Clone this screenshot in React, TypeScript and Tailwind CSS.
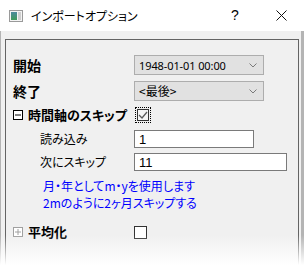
import React from 'react';

const jp = "font-['Noto_Sans_CJK_JP','Noto_Sans',sans-serif] [font-feature-settings:'palt']";

// Small tree toggle box (⊟ / ⊞)
const TreeBox = ({ open }: { open: boolean }) => (
  <svg width="10" height="10" viewBox="0 0 10 10" className="shrink-0">
    <rect x="0.5" y="0.5" width="9" height="9" fill="white" stroke={open ? '#000' : '#a0a0a0'} />
    <line x1="2" y1="5" x2="8" y2="5" stroke={open ? '#000' : '#a0a0a0'} />
    {!open && <line x1="5" y1="2" x2="5" y2="8" stroke="#a0a0a0" />}
  </svg>
);

const Chevron = () => (
  <svg width="8" height="5" viewBox="0 0 8 5" className="ml-auto mr-[6px]">
    <polyline points="0.5,0.5 4,4 7.5,0.5" fill="none" stroke="#7a7a7a" />
  </svg>
);

const Select = ({ value, mono }: { value: string; mono?: boolean }) => (
  <div className="w-[130px] h-[20px] bg-[#e1e1e1] border border-[#adadad] flex items-center pl-[4px]">
    <span
      className={`leading-none text-black ${
        mono ? "text-[11px] font-['Noto_Sans',sans-serif] tracking-[-0.1px]" : 'text-[12px]'
      }`}
    >
      {value}
    </span>
    <Chevron />
  </div>
);

const Input = ({ value, width }: { value: string; width: string }) => (
  <div className={`${width} h-[18px] bg-white border border-[#7a7a7a] flex items-center pl-[4px]`}>
    <span className="text-[13px] leading-none text-black font-['Liberation_Sans',sans-serif]">{value}</span>
  </div>
);

const App = () => {
  return (
    <div className={`w-[304px] h-[265px] bg-[#f0f0f0] relative overflow-hidden ${jp}`}>
      {/* Title bar */}
      <div className="h-[31px] bg-white flex items-center">
        <svg width="14" height="12" viewBox="0 0 14 12" className="ml-[9px] shrink-0">
          <defs>
            <linearGradient id="ic" x1="0" y1="0" x2="0" y2="1">
              <stop offset="0" stopColor="#4d8a9e" />
              <stop offset="1" stopColor="#3f9a5a" />
            </linearGradient>
          </defs>
          <rect x="0.5" y="0.5" width="13" height="11" fill="#f4f4f4" stroke="#9a9a9a" />
          <rect x="2" y="2" width="6" height="8" fill="url(#ic)" />
          <rect x="9" y="2" width="3" height="8" fill="#cfcfcf" />
        </svg>
        <span className="ml-[8px] text-[12px] leading-none text-black">インポートオプション</span>
        <div className="ml-auto flex h-full">
          <div className="w-[46px] flex items-center justify-center text-[14px] text-black font-['Liberation_Sans',sans-serif]">
            ?
          </div>
          <div className="w-[46px] flex items-center justify-center">
            <svg width="11" height="11" viewBox="0 0 11 11">
              <path d="M0.5 0.5 L10.5 10.5 M10.5 0.5 L0.5 10.5" stroke="#111" strokeWidth="1" />
            </svg>
          </div>
        </div>
      </div>

      {/* Body */}
      <div className="pl-[4px] pr-[2px] pt-[8px] border-l border-r-[3px] border-[#b4b4b4]">
        <div className="h-[240px] border-l border-t border-r border-[#646464]">
          {/* 開始 */}
          <div className="mt-[15px] h-[20px] flex items-center">
            <div className="w-[128px] pl-[7px] text-[14px] font-bold text-black">開始</div>
            <Select value="1948-01-01 00:00" mono />
          </div>

          {/* 終了 */}
          <div className="mt-[6px] h-[20px] flex items-center">
            <div className="w-[128px] pl-[7px] text-[14px] font-bold text-black">終了</div>
            <Select value="<最後>" />
          </div>

          {/* 時間軸のスキップ */}
          <div className="mt-[6px] h-[16px] flex items-center">
            <div className="w-[128px] pl-[7px] flex items-center gap-[5px]">
              <TreeBox open />
              <span className="text-[13px] font-bold text-black whitespace-nowrap">時間軸のスキップ</span>
            </div>
            <div className="ml-[1px] w-[16px] h-[16px] border border-dotted border-black flex items-center justify-center">
              <div className="w-[12px] h-[12px] border border-[#333] bg-[#f4f4f4] flex items-center justify-center">
                <svg width="10" height="8" viewBox="0 0 10 8">
                  <polyline points="1,4 4,7 9,1" fill="none" stroke="#5a5a5a" strokeWidth="1.3" />
                </svg>
              </div>
            </div>
          </div>

          {/* 読み込み */}
          <div className="mt-[7px] h-[18px] flex items-center">
            <div className="w-[128px] pl-[34px] text-[12px] text-black">読み込み</div>
            <Input value="1" width="w-[120px]" />
          </div>

          {/* 次にスキップ */}
          <div className="mt-[5px] h-[18px] flex items-center">
            <div className="w-[128px] pl-[34px] text-[12px] text-black">次にスキップ</div>
            <Input value="11" width="w-[153px]" />
          </div>

          {/* Hint */}
          <div className="mt-[6px] pl-[37px] text-[12px] leading-[17px] text-[#0000ff]">
            <div>月・年としてm・yを使用します</div>
            <div>2mのように2ヶ月スキップする</div>
          </div>

          {/* 平均化 */}
          <div className="mt-[13px] h-[16px] flex items-center">
            <div className="w-[128px] pl-[7px] flex items-center gap-[5px]">
              <TreeBox open={false} />
              <span className="text-[13px] font-bold text-black">平均化</span>
            </div>
            <div className="w-[13px] h-[13px] border border-[#333] bg-white" />
          </div>
        </div>
      </div>

      {/* Bottom fade */}
      <div className="absolute left-0 right-0 bottom-0 h-[30px] bg-gradient-to-b from-transparent to-white" />
    </div>
  );
};

export default App;
